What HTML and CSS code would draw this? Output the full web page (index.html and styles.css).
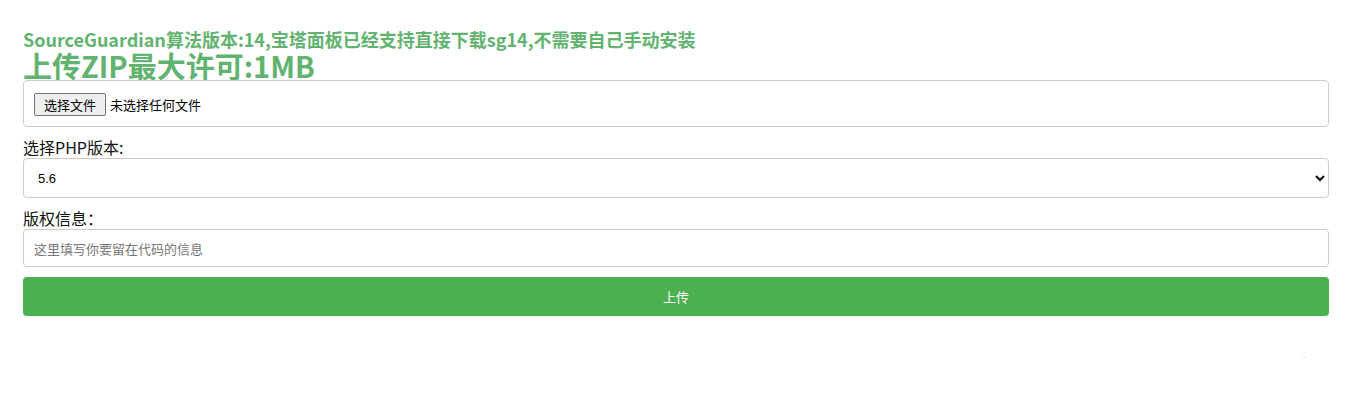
FILE: index.html
```html
<!DOCTYPE html>
<html lang="zh-CN">
<head>
<meta charset="utf-8">
<title>SourceGuardian</title>
<link rel="stylesheet" href="styles.css">
</head>
<body>
<div class="page">
  <h3 class="notice">SourceGuardian算法版本:14,宝塔面板已经支持直接下载sg14,不需要自己手动安装</h3>
  <h1 class="limit">上传ZIP最大许可:1MB</h1>
  <form class="form">
    <div class="file-box">
      <label class="file-btn" for="zip">选择文件</label>
      <span class="file-name">未选择任何文件</span>
      <input class="file-input" id="zip" type="file" name="zip">
    </div>
    <label class="label" for="php">选择PHP版本:</label>
    <select class="select" id="php" name="php">
      <option>5.6</option>
      <option>7.0</option>
      <option>7.1</option>
      <option>7.2</option>
      <option>7.3</option>
      <option>7.4</option>
    </select>
    <label class="label" for="copy">版权信息：</label>
    <input class="text" id="copy" type="text" placeholder="这里填写你要留在代码的信息">
    <button class="submit" type="button">上传</button>
    <div class="extra">
      <textarea class="ghost" aria-hidden="true"></textarea>
    </div>
  </form>
</div>
</body>
</html>
```
FILE: styles.css
```css
html, body {
  margin: 0;
  padding: 0;
  background: #fff;
}
body {
  font-family: "Noto Sans CJK SC", "Noto Sans", sans-serif;
  color: #222;
}
.page {
  padding: 27px 24px 0 23px;
}
.notice {
  margin: 0;
  font-size: 18px;
  line-height: 24px;
  font-weight: bold;
  color: #62b36f;
}
.limit {
  margin: 0;
  font-size: 29px;
  line-height: 29px;
  font-weight: bold;
  color: #62b36f;
}
.form {
  display: flex;
  flex-direction: column;
}
.file-box {
  border: 1px solid #ccc;
  border-radius: 4px;
  padding: 11px 10px 10px;
  height: 24px;
  display: flex;
  align-items: center;
  gap: 4px;
  font-size: 13px;
  color: #000;
}
.file-btn {
  box-sizing: border-box;
  height: 23px;
  padding: 0 9px;
  display: flex;
  align-items: center;
  background: #efefef;
  border: 1px solid #767676;
  border-radius: 2px;
  font-size: 13px;
  color: #000;
}
.file-name {
  font-size: 13px;
}
.file-input {
  display: none;
}
.label {
  margin-top: 10px;
  font-size: 16px;
  line-height: 21px;
  color: #111;
}
.select {
  height: 40px;
  border: 1px solid #ccc;
  border-radius: 4px;
  background: #fff;
  padding: 0 10px;
  font-family: "Liberation Sans", Arial, sans-serif;
  font-size: 13px;
  color: #000;
}
.text {
  height: 38px;
  box-sizing: border-box;
  border: 1px solid #ccc;
  border-radius: 4px;
  padding: 0 10px;
  font-family: "Noto Sans CJK SC", sans-serif;
  font-size: 13px;
}
.text::placeholder {
  color: #777;
}
.submit {
  margin-top: 10px;
  height: 39px;
  border: none;
  border-radius: 4px;
  background: #4caf50;
  color: #fff;
  font-family: "Noto Sans CJK SC", sans-serif;
  font-size: 13px;
}
.extra {
  display: flex;
  justify-content: flex-end;
  padding-right: 22px;
  margin-top: 10px;
}
.ghost {
  width: 200px;
  height: 30px;
  border: none;
  background: transparent;
  opacity: 0.12;
  outline: none;
}
```
